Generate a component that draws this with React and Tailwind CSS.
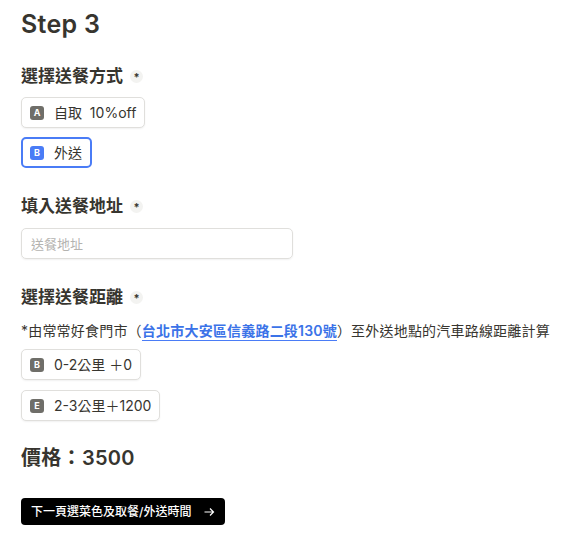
import React, { useState } from 'react';

const font = { fontFamily: '"Inter", "Noto Sans CJK TC", sans-serif' };

const Required = () => (
  <span className="ml-[7px] inline-flex h-[13px] w-[13px] items-center justify-center rounded-full bg-[#f3f3f1] pt-[3px] text-[11px] font-bold leading-none text-[#37352f]">
    *
  </span>
);

const Label = ({ children }) => (
  <div className="flex items-center text-[17px] font-semibold leading-[20px] text-[#37352f]">
    {children}
    <Required />
  </div>
);

const Key = ({ letter, active }) => (
  <span
    className={`inline-flex h-[14px] w-[14px] items-center justify-center rounded-[3px] text-[9px] font-bold leading-none text-white ${
      active ? 'bg-[#4a7cf6]' : 'bg-[#6f6e69]'
    }`}
  >
    {letter}
  </span>
);

const Option = ({ letter, label, active, onClick }) => (
  <button
    onClick={onClick}
    className={`flex h-[31px] items-center gap-[10px] rounded-[5px] bg-white text-[14px] text-[#37352f] ${
      active
        ? 'border-2 border-[#4a7cf6] pl-[7px] pr-[8px]'
        : 'border border-[#e0dfdc] pl-[8px] pr-[8px] shadow-[0_1px_2px_rgba(0,0,0,0.06)]'
    }`}
  >
    <Key letter={letter} active={active} />
    <span className="whitespace-pre">{label}</span>
  </button>
);

export default function App() {
  const [method, setMethod] = useState('B');
  const [distance, setDistance] = useState(null);

  return (
    <div className="min-h-screen bg-white px-[21px] pt-[9px]" style={font}>
      <h1 className="text-[25px] font-semibold leading-[30px] tracking-[0.3px] text-[#37352f]">Step 3</h1>

      {/* 送餐方式 */}
      <div className="mt-[27px]">
        <Label>選擇送餐方式</Label>
        <div className="mt-[11px] flex flex-col items-start gap-[9px]">
          <Option letter="A" label="自取  10%off" active={method === 'A'} onClick={() => setMethod('A')} />
          <Option letter="B" label="外送" active={method === 'B'} onClick={() => setMethod('B')} />
        </div>
      </div>

      {/* 地址 */}
      <div className="mt-[28px]">
        <Label>填入送餐地址</Label>
        <input
          placeholder="送餐地址"
          className="mt-[12px] h-[31px] w-[272px] rounded-[5px] border border-[#e0dfdc] px-[9px] text-[13px] text-[#37352f] shadow-[0_1px_2px_rgba(0,0,0,0.06)] outline-none placeholder:text-[#b4b3b0]"
        />
      </div>

      {/* 距離 */}
      <div className="mt-[28px]">
        <Label>選擇送餐距離</Label>
        <p className="mt-[14px] whitespace-nowrap text-[14px] leading-[20px] tracking-[0.2px] text-[#37352f]">
          *由常常好食門市（
          <a className="border-b-[1.5px] border-[#4a7cf6] pb-[1px] font-semibold text-[#3b73e8]">台北市大安區信義路二段130號</a>
          ）至外送地點的汽車路線距離計算
        </p>
        <div className="mt-[8px] flex flex-col items-start gap-[10px]">
          <Option letter="B" label="0-2公里 ＋0" active={distance === 0} onClick={() => setDistance(0)} />
          <Option letter="E" label="2-3公里＋1200" active={distance === 1} onClick={() => setDistance(1)} />
        </div>
      </div>

      <div className="mt-[24px] text-[20px] font-semibold leading-[26px] tracking-[0.3px] text-[#37352f]">價格：3500</div>

      <button className="mt-[27px] flex h-[27px] items-center gap-[12px] rounded-[4px] bg-black px-[10px] text-[12px] font-medium text-white">
        下一頁選菜色及取餐/外送時間
        <svg width="12" height="12" viewBox="0 0 12 12" fill="none" stroke="currentColor" strokeWidth="1.2">
          <path d="M1.5 6h9M7 2.5 10.5 6 7 9.5" />
        </svg>
      </button>
    </div>
  );
}
